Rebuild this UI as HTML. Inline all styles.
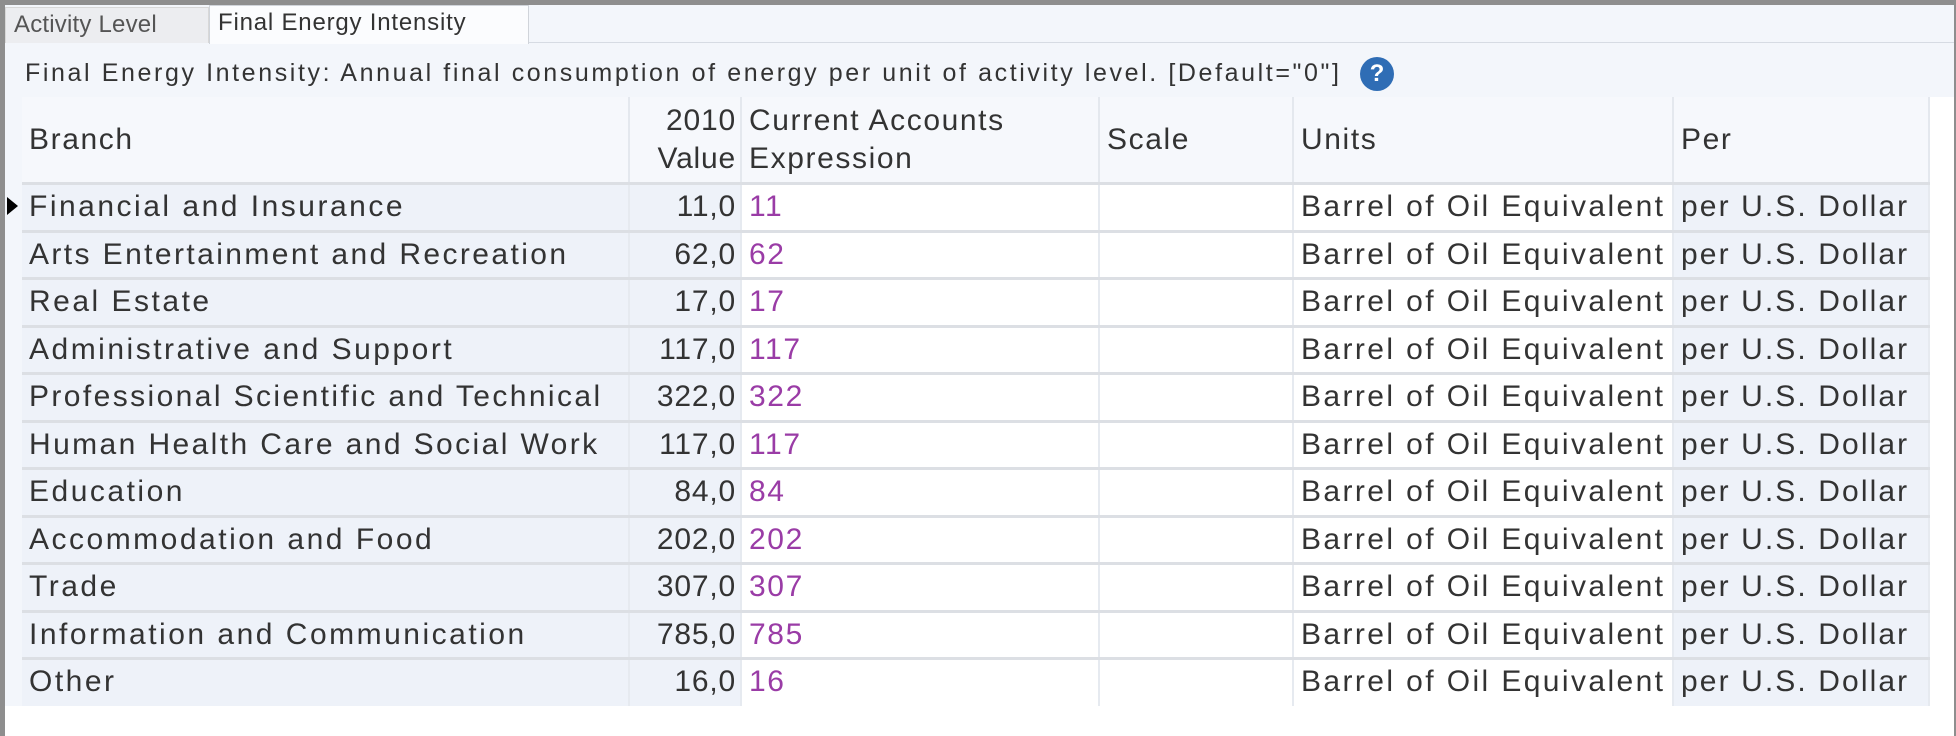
<!DOCTYPE html>
<html><head><meta charset="utf-8"><style>
*{margin:0;padding:0;box-sizing:border-box}
body{width:1956px;height:728px;background:#8e8e8e;position:relative;overflow:hidden;font-family:"Liberation Sans",sans-serif;color:#333}
#win{position:absolute;left:5px;top:5px;width:1949px;height:717px;background:#f3f6fb}
.tabbar{position:absolute;left:0;top:0;width:100%;height:38px;background:#f3f6fb;border-bottom:1px solid #d6dbe3}
.tab{position:absolute;top:2px;height:36px;font-size:24px;letter-spacing:0.8px;line-height:34px;padding-left:8px;color:#555;white-space:nowrap}
.t1{left:0;width:204px;background:#ecedf0;border:1px solid #d8d8d8;border-bottom:none;letter-spacing:0.2px}
.t2{left:204px;width:320px;background:#fbfcfe;border:1px solid #d0d4da;border-bottom:none;top:0;height:39px;color:#333}
.desc{position:absolute;left:20px;top:54px;font-size:25px;color:#333;white-space:nowrap;letter-spacing:2.6px}
.help{position:absolute;left:1355px;top:52px;width:34px;height:34px;border-radius:50%;background:#2f6db5;color:#fff;font-weight:bold;font-size:24px;text-align:center;line-height:34px}
.c{position:absolute;font-size:30px;letter-spacing:1.6px;white-space:nowrap;line-height:47px;padding-left:7px;overflow:hidden}
.hd{background:#f6f8fc;border-right:2px solid #e4e8ee}
.bl{background:#eef2f9}
.wh{background:#fff}
.r{text-align:right;padding-right:4px;padding-left:0;letter-spacing:0.8px}
.p{color:#9a3ca6}
.sep{position:absolute;left:17px;width:1908px;height:3px;background:#dcdfe4}
</style></head><body>
<div id="win">
<div class="tabbar"></div>
<div class="tab t1">Activity Level</div>
<div class="tab t2">Final Energy Intensity</div>
<div class="desc">Final Energy Intensity: Annual final consumption of energy per unit of activity level. [Default="0"]</div>
<div class="help">?</div>
<div style="position:absolute;left:1925px;top:92px;width:24px;height:625px;background:#fff"></div>
<div id="g"></div>
</div>
<script>
var cols=[[17,625],[625,737],[737,1095],[1095,1289],[1289,1669],[1669,1925]];
var html='';
var top0=92,hh=86;
var hdr=['Branch','2010<br>Value','Current Accounts<br>Expression','Scale','Units','Per'];
hdr.forEach(function(h,i){var c=cols[i];var lh=(i==1||i==2)?'line-height:38px;padding-top:5px;':'line-height:'+hh+'px;';
html+='<div class="c hd'+(i==1?' r':'')+'" style="left:'+c[0]+'px;width:'+(c[1]-c[0])+'px;top:'+top0+'px;height:'+hh+'px;'+lh+'">'+h+'</div>';});
var rows=[['Financial and Insurance','11'],['Arts Entertainment and Recreation','62'],['Real Estate','17'],['Administrative and Support','117'],['Professional Scientific and Technical','322'],['Human Health Care and Social Work','117'],['Education','84'],['Accommodation and Food','202'],['Trade','307'],['Information and Communication','785'],['Other','16']];
var rh=47.5,y0=top0+hh;
rows.forEach(function(r,k){var y=Math.round(y0+k*rh);var h=Math.round(rh);
var cells=[[r[0],'bl'],[r[1]+',0','bl r'],[r[1],'wh p'],['','wh'],['Barrel of Oil Equivalent','wh'],['per U.S. Dollar','bl']];
cells.forEach(function(t,i){var c=cols[i];var st='';
if(i==0)st=r[0].length>32?'letter-spacing:2.4px;':'letter-spacing:2.5px;';
if(i==4)st='letter-spacing:2.4px;';if(i==5)st='letter-spacing:2.1px;';
html+='<div class="c '+t[1]+'" style="left:'+c[0]+'px;width:'+(c[1]-c[0])+'px;top:'+y+'px;height:'+h+'px;border-right:2px solid #e6eaf0;'+st+'">'+t[0]+'</div>';});
html+='<div class="sep" style="top:'+(y-1)+'px"></div>';
});
html+='<div style="position:absolute;left:2px;top:'+(y0+14)+'px;width:0;height:0;border-top:9px solid transparent;border-bottom:9px solid transparent;border-left:11px solid #000"></div>';
html+='<div style="position:absolute;left:0;top:'+(y0+11*rh)+'px;width:1949px;height:30px;background:#fff"></div>';
document.getElementById('g').innerHTML=html;
</script>
</body></html>
